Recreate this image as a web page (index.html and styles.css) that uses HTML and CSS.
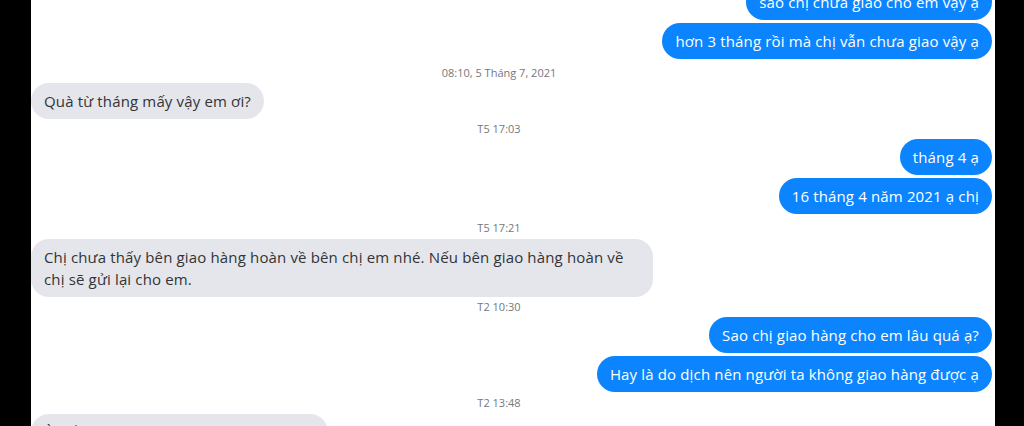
FILE: index.html
```html
<!DOCTYPE html>
<html lang="vi">
<head>
<meta charset="utf-8">
<title>Tin nhắn</title>
<link rel="stylesheet" href="styles.css">
</head>
<body class="screen">
  <main class="chat">
    <div class="thread">
      <div class="row row--out"><div class="bubble bubble--out">sao chị chưa giao cho em vậy ạ</div></div>
      <div class="row row--out row--grouped"><div class="bubble bubble--out">hơn 3 tháng rồi mà chị vẫn chưa giao vậy ạ</div></div>

      <div class="stamp stamp--date">08:10, 5 Tháng 7, 2021</div>
      <div class="row row--in"><div class="bubble bubble--in">Quà từ tháng mấy vậy em ơi?</div></div>

      <div class="stamp stamp--short">T5 17:03</div>
      <div class="row row--out"><div class="bubble bubble--out">tháng 4 ạ</div></div>
      <div class="row row--out row--grouped"><div class="bubble bubble--out">16 tháng 4 năm 2021 ạ chị</div></div>

      <div class="stamp stamp--tall">T5 17:21</div>
      <div class="row row--in"><div class="bubble bubble--in bubble--wide">Chị chưa thấy bên giao hàng hoàn về bên chị em nhé. Nếu bên giao hàng hoàn về chị sẽ gửi lại cho em.</div></div>

      <div class="stamp stamp--short">T2 10:30</div>
      <div class="row row--out"><div class="bubble bubble--out">Sao chị giao hàng cho em lâu quá ạ?</div></div>
      <div class="row row--out row--grouped"><div class="bubble bubble--out">Hay là do dịch nên người ta không giao hàng được ạ</div></div>

      <div class="stamp">T2 13:48</div>
      <div class="row row--in"><div class="bubble bubble--in">Ừ để chị hỏi lại bên giao hàng cho nhé</div></div>
    </div>
  </main>
</body>
</html>
```

FILE: styles.css
```css
html, body {
  margin: 0;
  padding: 0;
}

.screen {
  background: #000;
  height: 426px;
  overflow: hidden;
  font-family: "Open Sans", "Noto Sans", "Liberation Sans", sans-serif;
}

.chat {
  margin-left: 31px;
  width: 964px;
  height: 426px;
  background: #fff;
  overflow: hidden;
}

.thread {
  display: flex;
  flex-direction: column;
  margin-top: -16px;
  padding-right: 3px;
}

.row {
  display: flex;
}

.row--out {
  justify-content: flex-end;
}

.row--in {
  justify-content: flex-start;
}

.row--grouped {
  margin-top: 3px;
}

.bubble {
  box-sizing: border-box;
  min-height: 36px;
  padding: 7px 13px;
  border-radius: 18px;
  font-size: 15px;
  line-height: 22px;
  letter-spacing: 0.15px;
  white-space: nowrap;
}

.bubble--out {
  background: #0b84fe;
  color: #fff;
}

.bubble--in {
  background: #e4e6eb;
  color: #333436;
}

.bubble--wide {
  white-space: normal;
  width: 622px;
  padding-right: 24px;
  min-height: 58px;
}

.stamp {
  box-sizing: border-box;
  width: 936px;
  text-align: center;
  font-size: 11px;
  line-height: 22px;
  height: 22px;
  color: #75787c;
}

.stamp--date {
  height: 24px;
  line-height: 28px;
}

.stamp--short {
  height: 20px;
  line-height: 20px;
}

.stamp--tall {
  height: 25px;
  line-height: 28px;
}
```
